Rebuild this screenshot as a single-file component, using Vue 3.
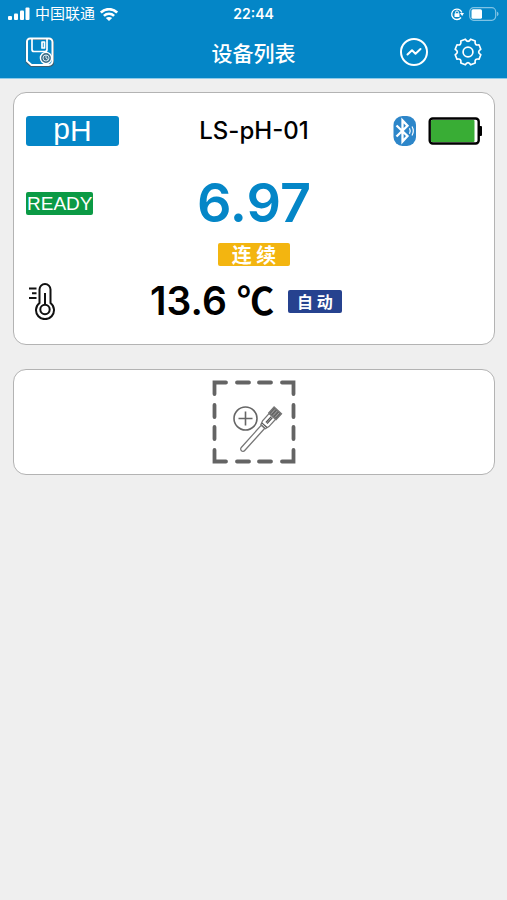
<script setup>
import { ref } from 'vue'

const device = ref({
  name: 'LS-pH-01',
  state: 'READY',
  value: '6.97',
  mode: '连 续',
  temperature: '13.6',
  unit: '℃',
  compensation: '自 动',
})
</script>

<template>
  <div class="screen">
    <header class="header">
      <div class="status">
        <div class="status-left">
          <svg class="signal" viewBox="0 0 22 14" aria-hidden="true">
            <rect x="0" y="9" width="4" height="4" rx="1" />
            <rect x="6" y="6.500" width="4" height="6.500" rx="1" />
            <rect x="12" y="3.500" width="4" height="9.500" rx="1" />
            <rect x="17.500" y="0.500" width="4" height="12.500" rx="1" />
          </svg>
          <span class="carrier">中国联通</span>
          <svg class="wifi" viewBox="0 0 18 13" aria-hidden="true">
            <path d="M0.800 4.600C5.400 0 12.600 0 17.200 4.600" />
            <path d="M3.900 7.900C6.800 5.100 11.200 5.100 14.100 7.900" />
            <path class="solid" d="M9 13L5.800 10C7.500 8.600 10.500 8.600 12.200 10Z" />
          </svg>
        </div>
        <time class="clock">22:44</time>
        <div class="status-right">
          <svg class="lock" viewBox="0 0 14 14" aria-hidden="true">
            <path d="M11 10.500A5.200 5.200 0 1 1 11.800 5.500" />
            <path class="solid" d="M9.800 6h4.200l-1.800 3z" />
            <rect class="solid" x="4.500" y="6.300" width="5" height="3.700" rx="0.500" />
            <path class="shackle" d="M5.600 6.500V5.300a1.400 1.400 0 0 1 2.800 0v1.200" />
          </svg>
          <svg class="phone-battery" viewBox="0 0 30 14" aria-hidden="true">
            <rect class="shell" x="0.700" y="0.700" width="26" height="12.600" rx="4" />
            <rect class="solid" x="2.500" y="2.300" width="10.500" height="9.400" rx="1.500" />
            <path class="cap" d="M28 4.800c2 .6 2 3.800 0 4.400z" />
          </svg>
        </div>
      </div>
      <nav class="nav">
        <div class="nav-side">
          <button class="icon-button" type="button" aria-label="保存">
            <svg viewBox="0 0 30 30">
              <path class="save-shadow" d="M6 2H26a3.500 3.500 0 0 1 3.500 3.500V25a4 4 0 0 1-4 4H7L2.500 25V5A3 3 0 0 1 6 2z" />
              <path class="line" d="M6 1.500H25a3.500 3.500 0 0 1 3.500 3.500V24a4 4 0 0 1-4 4H7.500L3 24V4.500a3 3 0 0 1 3-3z" />
              <path class="line thin" d="M8 2v10.500a2 2 0 0 0 2 2h11a2 2 0 0 0 2-2V2M18 5v6h2.500V5z" />
              <circle class="disc" cx="22" cy="21" r="5.600" />
              <circle class="disc-inner" cx="22" cy="21" r="3" />
              <path class="disc-inner" d="M22 18v3l2 1.500" />
            </svg>
          </button>
        </div>
        <h1 class="title">设备列表</h1>
        <div class="nav-side nav-right">
          <button class="icon-button" type="button" aria-label="曲线">
            <svg viewBox="0 0 30 30">
              <circle class="line" cx="15" cy="15" r="13" />
              <path class="line" d="M8.500 17.500L13 13.200L16.500 16.700L21.500 12" stroke-linecap="round" />
            </svg>
          </button>
          <button class="icon-button" type="button" aria-label="设置">
            <svg viewBox="0 0 30 30">
              <path class="line thin" d="M12.300 2.200Q15 6.500 17.700 2.200L22.200 4Q21.200 8.800 26 7.800L27.800 12.300Q23.500 15 27.800 17.700L26 22.200Q21.200 21.200 22.200 26L17.700 27.800Q15 23.500 12.300 27.800L7.800 26Q8.800 21.200 4 22.200L2.200 17.700Q6.500 15 2.200 12.300L4 7.800Q8.800 8.800 7.800 4Z" />
              <circle class="line thin" cx="15" cy="15" r="4.900" />
            </svg>
          </button>
        </div>
      </nav>
    </header>

    <main class="devices">
      <section class="card device">
        <div class="row top-row">
          <div><span class="probe"><span class="raised">p</span>H</span></div>
          <h2 class="name">{{ device.name }}</h2>
          <div class="indicators">
            <svg class="bluetooth" viewBox="0 0 24 30" role="img" aria-label="蓝牙">
              <rect x="0.500" y="0" width="22.500" height="30" rx="9" />
              <path class="rune" d="M3.500 9.500L14.500 20L9.500 25.500V4.500L14.500 9.800L3.500 20.500" />
              <path class="wave" d="M16.500 12.200q1.500 2.800 0 5.600M19 10.500q2.600 4.500 0 9" />
            </svg>
            <svg class="battery" viewBox="0 0 54 28" role="img" aria-label="电量">
              <rect class="case" x="1.700" y="1.500" width="49" height="25" rx="3" />
              <rect class="charge" x="3" y="3" width="43.500" height="22" rx="1" />
              <rect x="50.500" y="9" width="3.500" height="10" rx="1" />
            </svg>
          </div>
        </div>

        <div class="row value-row">
          <div><span class="ready">{{ device.state }}</span></div>
          <strong class="value">{{ device.value }}</strong>
        </div>

        <div class="mode-row">
          <span class="tag mode">{{ device.mode }}</span>
        </div>

        <div class="temperature-row">
          <svg class="thermometer" viewBox="0 0 30 38" role="img" aria-label="温度">
            <path d="M11.500 21V7.500a5.500 5.500 0 0 1 11 0V21a9 9 0 1 1-11 0z" />
            <circle cx="17" cy="27.500" r="4.700" />
            <path d="M17 11v11.500M1 6.500h7.500M4 11.200h4.500M1 16h7.500" />
          </svg>
          <div class="temperature">
            <span class="degrees">{{ device.temperature }}</span>
            <span class="unit">{{ device.unit }}</span>
            <span class="tag auto">{{ device.compensation }}</span>
          </div>
        </div>
      </section>

      <button class="card add" type="button" aria-label="添加设备">
        <svg viewBox="0 0 84 84">
          <g class="frame">
            <path d="M14 2.500H2.500V14M70 2.500H81.500V14M14 81.500H2.500V70M70 81.500H81.500V70" />
            <path d="M25 2.500H37M47 2.500H59M25 81.500H37M47 81.500H59M2.500 25V37M2.500 47V59M81.500 25V37M81.500 47V59" />
          </g>
          <g class="plus">
            <circle cx="33.500" cy="38.500" r="11.500" />
            <path d="M33.500 31.500v14M26.500 38.500h14" />
          </g>
          <g class="electrode" transform="translate(31 69) rotate(-48)">
            <path d="M0-2.300H30V2.300H0A2.300 2.300 0 0 1 0-2.300z" />
            <path d="M30-3L34-4.300H44V4.300H34L30 3z" />
            <path class="grip" d="M44-5H52V5H44z" />
            <path class="band" d="M35-0.700H43M35 0.900H43M32-3.500V3.500" />
            <path class="ridges" d="M45-2.700H51M45 0H51M45 2.700H51" />
          </g>
        </svg>
      </button>
    </main>
  </div>
</template>

<style>
body {
  margin: 0;
  background: #efefef;
}
</style>

<style scoped>
.screen {
  min-height: 100vh;
  background: #efefef;
  color: #000;
  font-family: Inter, "Noto Sans CJK SC", sans-serif;
}

button {
  padding: 0;
  border: 0;
  background: none;
  cursor: pointer;
}

svg {
  display: block;
  flex: none;
  fill: none;
}

.header {
  background: #0486c7;
  border-bottom: 1px solid #8dcbea;
  color: #fff;
}

.status {
  display: grid;
  grid-template-columns: 1fr auto 1fr;
  align-items: center;
  height: 24px;
  padding: 2px 8px 0;
}

.status-left,
.status-right {
  display: flex;
  align-items: center;
  gap: 5px;
}

.status-right {
  justify-content: flex-end;
}

.signal {
  width: 22px;
  height: 14px;
  fill: #fff;
}

.carrier {
  font-size: 15px;
  line-height: 20px;
}

.wifi {
  width: 18px;
  height: 13px;
  stroke: #fff;
  stroke-width: 2.6;
}

.solid {
  fill: #fff;
  stroke: none;
}

.clock {
  font-size: 14px;
  font-weight: 600;
  line-height: 20px;
}

.lock {
  width: 14px;
  height: 14px;
  stroke: #fff;
  stroke-width: 1.3;
}

.shackle {
  stroke-width: 1;
}

.phone-battery {
  width: 30px;
  height: 14px;
}

.shell {
  stroke: #7fc3e5;
  stroke-width: 1.2;
}

.cap {
  fill: #7fc3e5;
}

.nav {
  display: grid;
  grid-template-columns: 1fr auto 1fr;
  align-items: center;
  height: 52px;
  padding: 0 24px;
}

.nav-side {
  display: flex;
}

.nav-right {
  justify-content: flex-end;
  gap: 24px;
}

.icon-button svg {
  width: 30px;
  height: 30px;
}

.line {
  stroke: #fff;
  stroke-width: 2;
  stroke-linejoin: round;
}

.thin {
  stroke-width: 1.7;
}

.save-shadow {
  stroke: #3d5f70;
  stroke-width: 1.8;
}

.disc {
  fill: #3f6f88;
  stroke: #fff;
  stroke-width: 1.4;
}

.disc-inner {
  stroke: #d4e6ef;
  stroke-width: 1;
}

.title {
  margin: 0;
  font-family: "Noto Sans CJK SC", sans-serif;
  font-size: 21px;
  font-weight: 500;
  line-height: 28px;
}

.devices {
  display: flex;
  flex-direction: column;
  gap: 24px;
  padding: 13px 12px 24px 13px;
}

.card {
  border: 1px solid #b3b3b3;
  border-radius: 13px;
  background: #fff;
}

.device {
  padding: 20px 12px 18px;
}

.row {
  display: grid;
  grid-template-columns: 1fr auto 1fr;
  align-items: center;
}

.top-row {
  height: 36px;
}

.probe {
  display: block;
  width: 93px;
  height: 30px;
  border-radius: 3px;
  background: #0486c7;
  color: #fff;
  font-family: "Liberation Sans", Arial, sans-serif;
  font-size: 30px;
  line-height: 30px;
  text-align: center;
}

.raised {
  vertical-align: 2px;
  line-height: 1px;
}

.name {
  margin: 0;
  font-size: 24px;
  font-weight: 500;
  line-height: 30px;
}

.indicators {
  display: flex;
  align-items: center;
  justify-content: flex-end;
  gap: 11px;
}

.bluetooth {
  width: 24px;
  height: 30px;
  fill: #2d86c9;
}

.rune,
.wave {
  fill: none;
  stroke: #fff;
  stroke-width: 2.3;
}

.wave {
  stroke-width: 1.2;
}

.battery {
  width: 54px;
  height: 28px;
  fill: #000;
}

.case {
  fill: #fff;
  stroke: #000;
  stroke-width: 2.4;
}

.charge {
  fill: #39ad35;
}

.value-row {
  height: 60px;
  padding-top: 24px;
}

.ready {
  display: inline-block;
  padding: 0 1px;
  border-radius: 2px;
  background: #0b9a45;
  color: #fff;
  font-family: "Liberation Sans", Arial, sans-serif;
  font-size: 19px;
  line-height: 23px;
  vertical-align: top;
}

.value {
  color: #0486c7;
  font-size: 54px;
  font-weight: 600;
  line-height: 60px;
}

.mode-row {
  display: flex;
  justify-content: center;
  padding-top: 10px;
}

.tag {
  border-radius: 2px;
  color: #fff;
  font-family: "Noto Sans CJK SC", sans-serif;
  font-weight: 700;
  line-height: 23px;
  text-align: center;
}

.mode {
  width: 72px;
  background: #f3b510;
  font-size: 20px;
}

.temperature-row {
  display: grid;
  grid-template-columns: 32px 1fr 48px;
  align-items: center;
  height: 50px;
  padding-top: 10px;
}

.thermometer {
  width: 30px;
  height: 38px;
  margin-left: 2px;
  stroke: #111;
  stroke-width: 2;
}

.temperature {
  display: flex;
  align-items: center;
  justify-content: center;
}

.degrees {
  font-size: 39px;
  font-weight: 600;
  line-height: 48px;
}

.unit {
  margin: 0 14px 0 10px;
  padding-bottom: 4px;
  font-family: "Noto Sans CJK SC", sans-serif;
  font-size: 37px;
  font-weight: 700;
  line-height: 44px;
}

.auto {
  width: 54px;
  background: #26428f;
  font-size: 16px;
}

.add {
  display: flex;
  align-items: center;
  justify-content: center;
  width: 100%;
  padding: 10px;
}

.add svg {
  width: 84px;
  height: 84px;
}

.frame {
  stroke: #646464;
  stroke-width: 3.8;
  stroke-linecap: round;
}

.plus {
  stroke: #666;
  stroke-width: 1.6;
}

.electrode {
  stroke: #777;
  stroke-width: 1.3;
}

.grip {
  fill: #666;
}

.band {
  stroke: #555;
}

.ridges {
  stroke: #bbb;
  stroke-width: 0.7;
}
</style>
